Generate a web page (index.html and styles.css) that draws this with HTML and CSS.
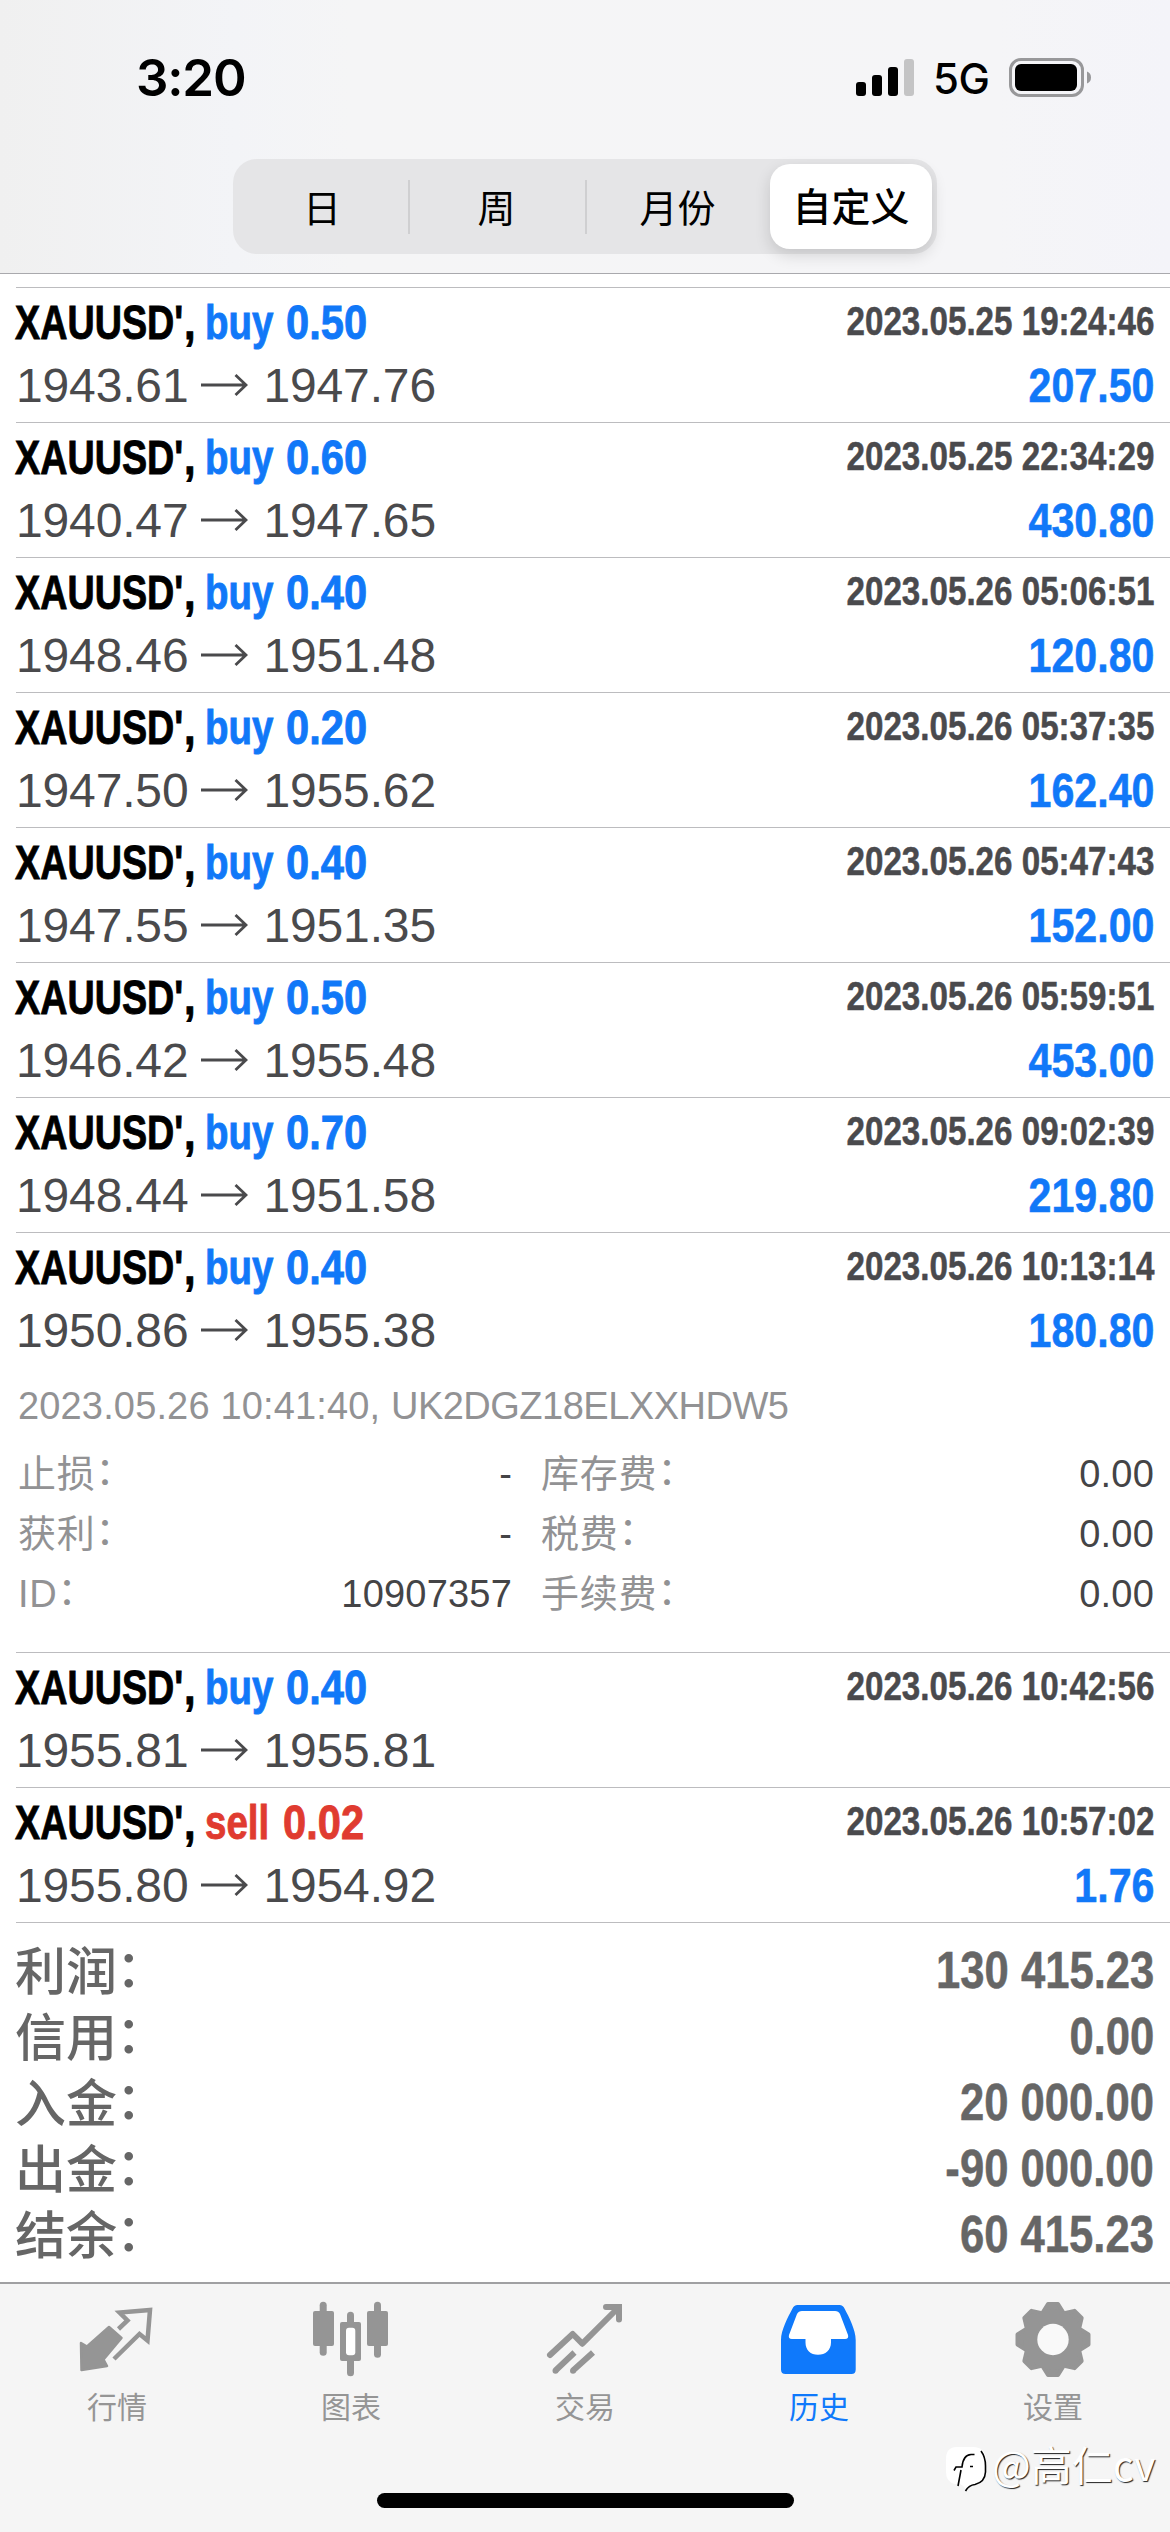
FILE: index.html
```
<!DOCTYPE html>
<html lang="zh-CN">
<head>
<meta charset="utf-8">
<title>历史</title>
<link rel="stylesheet" href="styles.css">
</head>
<body>
<svg class="defs" width="0" height="0">
  <symbol id="arrow" viewBox="0 0 48 24"><path d="M1 12H46M35.500 2L46 12L35.500 22" fill="none" stroke="currentColor" stroke-width="2.800"/></symbol>
</svg>
<div class="screen">
  <header class="header">
    <div class="status">
      <div class="time">3:20</div>
      <div class="status-icons">
        <svg class="signal" width="58" height="38" viewBox="0 0 58 38"><rect x="0" y="23" width="10" height="14" rx="3"/><rect x="16" y="16" width="10" height="21" rx="3"/><rect x="32" y="8" width="10" height="29" rx="3"/><rect x="48" y="0" width="10" height="37" rx="3" fill="#c4c4c5"/></svg>
        <span class="net">5G</span>
        <svg class="battery" width="82" height="39" viewBox="0 0 82 39"><rect x="1.500" y="1.500" width="72" height="36" rx="10.500" fill="none" stroke="#98989a" stroke-width="3"/><rect x="6" y="6" width="62" height="27" rx="6"/><path d="M78 13.500Q82 15 82 19.500T78 25.500Z" fill="#98989a"/></svg>
      </div>
    </div>
    <nav class="segments">
      <span class="segment">日</span><i class="divider"></i>
      <span class="segment">周</span><i class="divider"></i>
      <span class="segment">月份</span>
      <span class="segment selected">自定义</span>
    </nav>
  </header>

  <main class="list">
    <section class="deal">
      <div class="title"><b class="sym">XAUUSD'</b><b class="comma">,</b><b class="side buy">buy</b><b class="vol buy">0.50</b></div><b class="date">2023.05.25 19:24:46</b>
      <div class="price">1943.61<svg class="arrow"><use href="#arrow"/></svg>1947.76</div><b class="profit">207.50</b>
    </section>
    <section class="deal">
      <div class="title"><b class="sym">XAUUSD'</b><b class="comma">,</b><b class="side buy">buy</b><b class="vol buy">0.60</b></div><b class="date">2023.05.25 22:34:29</b>
      <div class="price">1940.47<svg class="arrow"><use href="#arrow"/></svg>1947.65</div><b class="profit">430.80</b>
    </section>
    <section class="deal">
      <div class="title"><b class="sym">XAUUSD'</b><b class="comma">,</b><b class="side buy">buy</b><b class="vol buy">0.40</b></div><b class="date">2023.05.26 05:06:51</b>
      <div class="price">1948.46<svg class="arrow"><use href="#arrow"/></svg>1951.48</div><b class="profit">120.80</b>
    </section>
    <section class="deal">
      <div class="title"><b class="sym">XAUUSD'</b><b class="comma">,</b><b class="side buy">buy</b><b class="vol buy">0.20</b></div><b class="date">2023.05.26 05:37:35</b>
      <div class="price">1947.50<svg class="arrow"><use href="#arrow"/></svg>1955.62</div><b class="profit">162.40</b>
    </section>
    <section class="deal">
      <div class="title"><b class="sym">XAUUSD'</b><b class="comma">,</b><b class="side buy">buy</b><b class="vol buy">0.40</b></div><b class="date">2023.05.26 05:47:43</b>
      <div class="price">1947.55<svg class="arrow"><use href="#arrow"/></svg>1951.35</div><b class="profit">152.00</b>
    </section>
    <section class="deal">
      <div class="title"><b class="sym">XAUUSD'</b><b class="comma">,</b><b class="side buy">buy</b><b class="vol buy">0.50</b></div><b class="date">2023.05.26 05:59:51</b>
      <div class="price">1946.42<svg class="arrow"><use href="#arrow"/></svg>1955.48</div><b class="profit">453.00</b>
    </section>
    <section class="deal">
      <div class="title"><b class="sym">XAUUSD'</b><b class="comma">,</b><b class="side buy">buy</b><b class="vol buy">0.70</b></div><b class="date">2023.05.26 09:02:39</b>
      <div class="price">1948.44<svg class="arrow"><use href="#arrow"/></svg>1951.58</div><b class="profit">219.80</b>
    </section>
    <section class="deal">
      <div class="title"><b class="sym">XAUUSD'</b><b class="comma">,</b><b class="side buy">buy</b><b class="vol buy">0.40</b></div><b class="date">2023.05.26 10:13:14</b>
      <div class="price">1950.86<svg class="arrow"><use href="#arrow"/></svg>1955.38</div><b class="profit">180.80</b>
    </section>

    <section class="detail">
      <div class="opened">2023.05.26 10:41:40, <span class="code">UK2DGZ18ELXXHDW5</span></div>
      <div class="fields">
        <span>止损<i class="colon">：</i></span><span class="value">-</span><span>库存费<i class="colon">：</i></span><span class="value">0.00</span>
        <span>获利<i class="colon">：</i></span><span class="value">-</span><span>税费<i class="colon">：</i></span><span class="value">0.00</span>
        <span>ID<i class="colon">：</i></span><span class="value">10907357</span><span>手续费<i class="colon">：</i></span><span class="value">0.00</span>
      </div>
    </section>

    <section class="deal">
      <div class="title"><b class="sym">XAUUSD'</b><b class="comma">,</b><b class="side buy">buy</b><b class="vol buy">0.40</b></div><b class="date">2023.05.26 10:42:56</b>
      <div class="price">1955.81<svg class="arrow"><use href="#arrow"/></svg>1955.81</div><b class="profit"></b>
    </section>
    <section class="deal">
      <div class="title"><b class="sym">XAUUSD'</b><b class="comma">,</b><b class="side sell">sell</b><b class="vol sell">0.02</b></div><b class="date">2023.05.26 10:57:02</b>
      <div class="price">1955.80<svg class="arrow"><use href="#arrow"/></svg>1954.92</div><b class="profit">1.76</b>
    </section>

    <section class="summary">
      <div class="total"><span>利润<i class="colon">：</i></span><b>130 415.23</b></div>
      <div class="total"><span>信用<i class="colon">：</i></span><b>0.00</b></div>
      <div class="total"><span>入金<i class="colon">：</i></span><b>20 000.00</b></div>
      <div class="total"><span>出金<i class="colon">：</i></span><b>-90 000.00</b></div>
      <div class="total"><span>结余<i class="colon">：</i></span><b>60 415.23</b></div>
    </section>
  </main>

  <footer class="tabbar">
    <a class="tab"><svg viewBox="0 0 80 80"><path d="M4 43L10 46.500L32 27L44.500 38L26.500 59.500L30 66L4.500 70Z" fill="currentColor" stroke="currentColor" stroke-width="2.500" stroke-linejoin="round"/><path d="M41.500 29L50.500 20.500L42.500 12.500L73 10L70.500 40.500L62.500 34L37 59" fill="none" stroke="currentColor" stroke-width="4.500"/></svg><span>行情</span></a>
    <a class="tab"><svg viewBox="0 0 80 80" fill="currentColor"><rect x="8.700" y="1.700" width="7" height="54" rx="3.500"/><rect x="2" y="11" width="21" height="35" rx="2"/><rect x="63" y="1.700" width="7" height="56" rx="3.500"/><rect x="56" y="11" width="21" height="35" rx="2"/><rect x="36" y="11.700" width="7" height="64.500" rx="3.500"/><rect x="29" y="22" width="21" height="39" rx="2"/><rect x="35" y="27.700" width="9.300" height="27.500" rx="3" fill="#fff"/></svg><span>图表</span></a>
    <a class="tab"><svg viewBox="0 0 80 80" fill="none" stroke="currentColor" stroke-width="6"><path stroke-linecap="round" stroke-linejoin="round" d="M5 55L27.700 34L37.300 43.700L73 8"/><path stroke-linecap="round" d="M61 7H74V19.500"/><path d="M10.500 70.500L29.500 52.500M28 70.500L48 52.500"/><circle cx="10.500" cy="70.800" r="3" fill="currentColor" stroke="none"/><circle cx="28" cy="70.800" r="3" fill="currentColor" stroke="none"/></svg><span>交易</span></a>
    <a class="tab active"><svg viewBox="0 0 80 80"><path fill="currentColor" d="M18.500 5H60.500Q64 5 65.500 8.500C70 17 76.700 30 76.700 40V69.500Q76.700 74 72.500 74H6.500Q2 74 2 69.500V40C2 30 9 17 13.500 8.500Q15 5 18.500 5Z"/><path fill="#fff" d="M23 11H56Q59.500 11 61 14L69 35Q70 39 66 39H52V42.500C52 50 46.500 54.800 39 54.800S26.500 50 26.500 42.500V39H13Q9 39 10 35L18 14Q19.500 11 23 11Z"/></svg><span>历史</span></a>
    <a class="tab"><svg viewBox="-40 -39.500 80 80" fill="currentColor"><g stroke="currentColor" stroke-width="4" stroke-linejoin="round"><path id="teeth" d="M-5 -35.500H5L10 -27.500H-10ZM-5 35.500H5L10 27.500H-10ZM-35.500 -5V5L-27.500 10V-10ZM35.500 -5V5L27.500 10V-10Z"/><use href="#teeth" transform="rotate(45)"/></g><circle r="30"/><circle r="15.700" fill="#f9f9f9"/></svg><span>设置</span></a>
  </footer>
  <div class="home"></div>

  <div class="watermark">
    <svg width="44" height="48" viewBox="0 0 44 48"><path d="M12 1H28Q41 1 41 15V26Q41 36 31 38Q25 39 21 45Q20 40 15 38H10Q1 36 1 26V13Q1 1 12 1Z" fill="#fff"/><path d="M36 5Q40.500 11 40.500 20V26Q40 36 30 38.500Q24 39 20.500 45" fill="none" stroke="#000" stroke-width="1.600"/><path d="M13 40L16 24M9 24.500L11 21H17Q18 9 26 8.500H29.500M25 20.500H28" fill="none" stroke="#000" stroke-width="1.600"/></svg>
    <span>@高仁cv</span>
  </div>
</div>
</body>
</html>
```
FILE: styles.css
```
* { box-sizing: border-box; }
body { margin: 0; background: #fff; }
i { font-style: normal; }
.defs { position: absolute; }
.screen {
  position: relative;
  display: flex;
  flex-direction: column;
  width: 1170px;
  height: 2532px;
  background: #fff;
  overflow: hidden;
  font-family: "Liberation Sans", "Noto Sans CJK SC", sans-serif;
}

/* status bar and period switch */
.header {
  height: 274px;
  flex: none;
  border-bottom: 1px solid #a9a9ad;
  background: linear-gradient(90deg, #f0f0f0 0, #f3f4f7 20%, #f5f5f6 30%, #f5f5f7 85%, #f4f4f9 100%);
}
.status {
  height: 159px;
  padding: 0 79px 0 136px;
  display: flex;
  justify-content: space-between;
}
.time { padding-top: 47px; font: 600 51px/62px Inter, sans-serif; letter-spacing: -1.2px; }
.status-icons { display: flex; padding-top: 58px; }
.signal { margin: 1px 20px 0 0; }
.net { width: 75px; margin-left: -1px; font: 500 42px/42px Inter, sans-serif; letter-spacing: -.5px; }
.battery { margin-left: 1px; }
.segments {
  width: 704px;
  height: 95px;
  margin: 0 auto;
  padding: 5px;
  display: grid;
  grid-template-columns: 170px 2px 175px 2px 183px 162px;
  align-items: center;
  border-radius: 24px;
  background: #e5e5e7;
  font: 400 38px/80px "Noto Sans CJK SC", sans-serif;
}
.segment { text-align: center; padding: 0 2px 2px 0; }
.segment.selected {
  padding-right: 0;
  height: 85px;
  border-radius: 20px;
  background: #fff;
  font-size: 39px;
  font-weight: 500;
  box-shadow: 0 6px 16px rgba(0, 0, 0, .14);
}
.divider { width: 2px; height: 54px; background: #cfcfd1; }

/* deals */
.list { flex: 1; padding: 13px 0 0 16px; }
.deal {
  height: 135px;
  padding-right: 16px;
  display: grid;
  grid-template-columns: 1fr auto;
  grid-template-rows: 69px 57px;
  border-top: 1px solid #bcbcbf;
}
.title { display: grid; grid-template-columns: 169px 20px auto auto 1fr; font-size: 49px; line-height: 69px; }
.title b { transform-origin: 0 50%; white-space: pre; -webkit-text-stroke: .9px currentColor; }
.sym { transform: translateX(-1px) scaleX(.77); }
.comma { transform: translateX(-1px) scaleX(.85); }
.side { width: 81px; transform: scaleX(.785); }
.side.sell { width: 78px; }
.vol { transform: scaleX(.85); }
.buy { color: #1178f8; }
.sell { color: #e03b30; }
.date {
  color: #4a4a4d;
  font-size: 40px;
  line-height: 66px;
  white-space: pre;
  -webkit-text-stroke: .5px currentColor;
  transform: scaleX(.829);
  transform-origin: 100% 50%;
}
.price { display: flex; color: #4a4a4c; font-size: 48px; line-height: 57px; letter-spacing: -.15px; }
.arrow { width: 48px; height: 24px; margin: 16px 15px 0 12px; }
.profit {
  color: #1178f8;
  font-size: 49px;
  line-height: 57px;
  text-align: right;
  -webkit-text-stroke: .6px currentColor;
  transform: scaleX(.84);
  transform-origin: 100% 50%;
}

.detail { height: 285px; padding: 0 16px 0 2px; color: #929294; font-size: 38px; }
.opened { line-height: 79px; height: 77px; letter-spacing: .15px; }
.code { letter-spacing: -.5px; }
.fields {
  display: grid;
  grid-template-columns: 200px 294px 230px 1fr;
  line-height: 60px;
  letter-spacing: .8px;
}
.fields span:nth-child(4n + 3) { padding-left: 29px; }
.value { color: #444446; text-align: right; letter-spacing: .2px; }
.detail .colon { position: relative; top: -3px; }

.summary { padding: 15px 16px 0 0; border-top: 1px solid #bcbcbf; color: #666; }
.total { display: flex; justify-content: space-between; font-size: 51px; line-height: 66px; font-weight: 500; }
.total span { margin: 2px 0 -2px -1px; }
.total b { -webkit-text-stroke: .5px currentColor; transform: scaleX(.855); transform-origin: 100% 50%; }
.total .colon { position: relative; top: -3px; left: -1px; }

/* bottom navigation */
.tabbar {
  flex: none;
  height: 250px;
  padding-top: 16px;
  display: grid;
  grid-template-columns: repeat(5, 1fr);
  border-top: 2px solid #a0a0a2;
  background: #f5f5f5;
}
.tab {
  display: flex;
  flex-direction: column;
  align-items: center;
  color: #959595;
  font: 400 30px/44px "Noto Sans CJK SC", sans-serif;
}
.tab svg { width: 80px; height: 80px; margin-bottom: 3px; }
.tab.active { color: #0f79fb; }
.home {
  position: absolute;
  left: 377px;
  bottom: 24px;
  width: 417px;
  height: 15px;
  border-radius: 8px;
  background: #000;
}
.watermark {
  position: absolute;
  left: 945px;
  top: 2446px;
  display: flex;
  color: #fff;
  font: 400 41px/34px "Noto Sans CJK SC", sans-serif;
  text-shadow: 1px 1px 1px #222;
}
.watermark span { margin-left: 3px; }
```
